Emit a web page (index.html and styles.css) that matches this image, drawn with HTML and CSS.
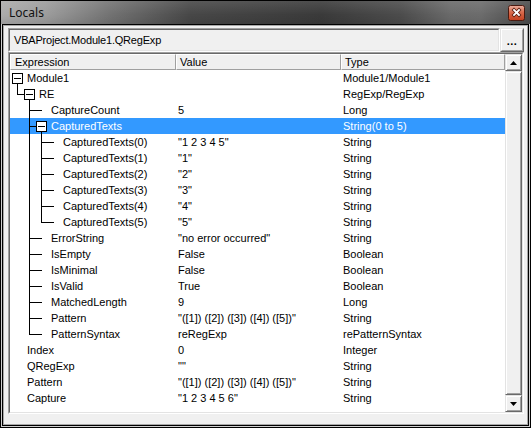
FILE: index.html
```html
<!DOCTYPE html>
<html>
<head>
<meta charset="utf-8">
<link rel="stylesheet" href="styles.css">
</head>
<body>
<div class="win">
  <div class="titlebar">
    <span class="title">Locals</span>
    <span class="close">
      <svg width="17" height="16" viewBox="0 0 17 16">
        <defs>
          <linearGradient id="cg" x1="0" y1="0" x2="0" y2="1">
            <stop offset="0" stop-color="#eab0a0"/>
            <stop offset="0.45" stop-color="#d86a4c"/>
            <stop offset="1" stop-color="#c4401e"/>
          </linearGradient>
        </defs>
        <rect x="0.5" y="0.5" width="16" height="15" rx="2" fill="url(#cg)" stroke="#4a1a10"/>
        <path d="M6 5 L11 10 M11 5 L6 10" stroke="#5a1e10" stroke-width="3.4" stroke-linecap="square"/>
        <path d="M6 5 L11 10 M11 5 L6 10" stroke="#ffffff" stroke-width="1.8" stroke-linecap="square"/>
      </svg>
    </span>
  </div>
  <div class="frame">
    <div class="client">
      <div class="toolbar">
        <div class="combo"><div class="combo-in">VBAProject.Module1.QRegExp</div></div>
        <div class="btn"><div class="btn-in">...</div></div>
      </div>
      <div class="list">
        <div class="list-in">
          <div class="grid">
            <div class="header">
              <div class="hcell first">Expression</div>
              <div class="hcell">Value</div>
              <div class="hcell">Type</div>
            </div>
            <div class="rows">
              <div class="row">
                <div class="c1"><svg class="g" viewBox="0 0 12 16"><rect x="0.5" y="3.5" width="10" height="10" fill="#fff" stroke="#000"/><path d="M2 8.5h7M5.5 14v2" stroke="#000"/></svg><span class="txt">Module1</span></div>
                <div class="c2"></div><div class="c3">Module1/Module1</div>
              </div>
              <div class="row">
                <div class="c1"><span class="g elbow"></span><svg class="g" viewBox="0 0 12 16"><rect x="0.5" y="3.5" width="10" height="10" fill="#fff" stroke="#000"/><path d="M2 8.5h7M5.5 14v2" stroke="#000"/></svg><span class="txt">RE</span></div>
                <div class="c2"></div><div class="c3">RegExp/RegExp</div>
              </div>
              <div class="row">
                <div class="c1"><span class="g"></span><span class="g tee"></span><span class="g leaf"></span><span class="txt">CaptureCount</span></div>
                <div class="c2">5</div><div class="c3">Long</div>
              </div>
              <div class="row sel">
                <div class="c1"><span class="g"></span><span class="g tee"></span><svg class="g" viewBox="0 0 12 16"><rect x="0.5" y="3.5" width="10" height="10" fill="#fff" stroke="#000"/><path d="M2 8.5h7M5.5 14v2" stroke="#000"/></svg><span class="txt">CapturedTexts</span></div>
                <div class="c2"></div><div class="c3">String(0 to 5)</div>
              </div>
              <div class="row">
                <div class="c1"><span class="g"></span><span class="g pipe"></span><span class="g tee"></span><span class="g leaf"></span><span class="txt">CapturedTexts(0)</span></div>
                <div class="c2">"1 2 3 4 5"</div><div class="c3">String</div>
              </div>
              <div class="row">
                <div class="c1"><span class="g"></span><span class="g pipe"></span><span class="g tee"></span><span class="g leaf"></span><span class="txt">CapturedTexts(1)</span></div>
                <div class="c2">"1"</div><div class="c3">String</div>
              </div>
              <div class="row">
                <div class="c1"><span class="g"></span><span class="g pipe"></span><span class="g tee"></span><span class="g leaf"></span><span class="txt">CapturedTexts(2)</span></div>
                <div class="c2">"2"</div><div class="c3">String</div>
              </div>
              <div class="row">
                <div class="c1"><span class="g"></span><span class="g pipe"></span><span class="g tee"></span><span class="g leaf"></span><span class="txt">CapturedTexts(3)</span></div>
                <div class="c2">"3"</div><div class="c3">String</div>
              </div>
              <div class="row">
                <div class="c1"><span class="g"></span><span class="g pipe"></span><span class="g tee"></span><span class="g leaf"></span><span class="txt">CapturedTexts(4)</span></div>
                <div class="c2">"4"</div><div class="c3">String</div>
              </div>
              <div class="row">
                <div class="c1"><span class="g"></span><span class="g pipe"></span><span class="g elbow"></span><span class="g leaf"></span><span class="txt">CapturedTexts(5)</span></div>
                <div class="c2">"5"</div><div class="c3">String</div>
              </div>
              <div class="row">
                <div class="c1"><span class="g"></span><span class="g tee"></span><span class="g leaf"></span><span class="txt">ErrorString</span></div>
                <div class="c2">"no error occurred"</div><div class="c3">String</div>
              </div>
              <div class="row">
                <div class="c1"><span class="g"></span><span class="g tee"></span><span class="g leaf"></span><span class="txt">IsEmpty</span></div>
                <div class="c2">False</div><div class="c3">Boolean</div>
              </div>
              <div class="row">
                <div class="c1"><span class="g"></span><span class="g tee"></span><span class="g leaf"></span><span class="txt">IsMinimal</span></div>
                <div class="c2">False</div><div class="c3">Boolean</div>
              </div>
              <div class="row">
                <div class="c1"><span class="g"></span><span class="g tee"></span><span class="g leaf"></span><span class="txt">IsValid</span></div>
                <div class="c2">True</div><div class="c3">Boolean</div>
              </div>
              <div class="row">
                <div class="c1"><span class="g"></span><span class="g tee"></span><span class="g leaf"></span><span class="txt">MatchedLength</span></div>
                <div class="c2">9</div><div class="c3">Long</div>
              </div>
              <div class="row">
                <div class="c1"><span class="g"></span><span class="g tee"></span><span class="g leaf"></span><span class="txt">Pattern</span></div>
                <div class="c2">"([1]) ([2]) ([3]) ([4]) ([5])"</div><div class="c3">String</div>
              </div>
              <div class="row">
                <div class="c1"><span class="g"></span><span class="g elbow"></span><span class="g leaf"></span><span class="txt">PatternSyntax</span></div>
                <div class="c2">reRegExp</div><div class="c3">rePatternSyntax</div>
              </div>
              <div class="row">
                <div class="c1"><span class="g"></span><span class="txt">Index</span></div>
                <div class="c2">0</div><div class="c3">Integer</div>
              </div>
              <div class="row">
                <div class="c1"><span class="g"></span><span class="txt">QRegExp</span></div>
                <div class="c2">""</div><div class="c3">String</div>
              </div>
              <div class="row">
                <div class="c1"><span class="g"></span><span class="txt">Pattern</span></div>
                <div class="c2">"([1]) ([2]) ([3]) ([4]) ([5])"</div><div class="c3">String</div>
              </div>
              <div class="row">
                <div class="c1"><span class="g"></span><span class="txt">Capture</span></div>
                <div class="c2">"1 2 3 4 5 6"</div><div class="c3">String</div>
              </div>
            </div>
          </div>
          <div class="vscroll">
            <div class="sbtn"><svg width="7" height="4" viewBox="0 0 7 4"><path d="M3.5 0 L7 4 L0 4 Z" fill="#000"/></svg></div>
            <div class="thumb"></div>
            <div class="sbtn"><svg width="7" height="4" viewBox="0 0 7 4"><path d="M0 0 L7 0 L3.5 4 Z" fill="#000"/></svg></div>
          </div>
        </div>
      </div>
    </div>
  </div>
</div>
</body>
</html>
```

FILE: styles.css
```css
html, body {
  margin: 0;
  padding: 0;
  background: #000;
}

body {
  width: 531px;
  height: 428px;
  overflow: hidden;
  font-family: "Liberation Sans", Arial, sans-serif;
  font-size: 11px;
  color: #000;
}

.win {
  width: 531px;
  height: 428px;
  box-sizing: border-box;
  border: 1px solid #000;
  background: #cfcfcf;
  display: flex;
  flex-direction: column;
}

.titlebar {
  height: 23px;
  flex: none;
  display: flex;
  align-items: center;
  padding-left: 8px;
  background:
    linear-gradient(180deg, rgba(255,255,255,0.10) 0, rgba(255,255,255,0) 60%, rgba(0,0,0,0.08) 100%),
    linear-gradient(90deg, #ababab 0, #9c9c9c 45px, #727272 110px, #474747 190px, #3a3a3a 320px, #4c4c4c 400px, #6a6a6a 450px, #6c6c6c 480px, #4a4a4a 531px);
}

.title {
  font-family: "Noto Sans", "Open Sans", sans-serif;
  font-size: 12px;
  color: #111;
  line-height: 16px;
}

.close {
  margin-left: auto;
  margin-right: 5px;
  width: 17px;
  height: 16px;
  display: flex;
}

.frame {
  flex: 1;
  margin: 0 1px 1px;
  border: 1px solid #000;
  display: flex;
}

.client {
  flex: 1;
  background: #f0f0f0;
  border: 1px solid #a8a8a8;
  padding: 2px 3px 10px 4px;
  display: flex;
  flex-direction: column;
}

.toolbar {
  height: 24px;
  display: flex;
  flex: none;
}

.combo {
  flex: 1;
  border: 1px solid;
  border-color: #a0a0a0 #ffffff #ffffff #a0a0a0;
  display: flex;
}

.combo-in {
  flex: 1;
  border: 1px solid;
  border-color: #696969 #e3e3e3 #e3e3e3 #696969;
  background: #f0f0f0;
  padding-left: 4px;
  line-height: 20px;
  font-size: 11px;
  letter-spacing: -0.2px;
}

.btn {
  width: 24px;
  flex: none;
  box-sizing: border-box;
  border: 1px solid;
  border-color: #e3e3e3 #696969 #696969 #e3e3e3;
  display: flex;
}

.btn-in {
  flex: 1;
  border: 1px solid;
  border-color: #ffffff #a0a0a0 #a0a0a0 #ffffff;
  background: #f0f0f0;
  font-weight: bold;
  font-size: 11px;
  line-height: 22px;
  text-align: center;
  letter-spacing: 0.5px;
}

.list {
  height: 362px;
  flex: none;
  box-sizing: border-box;
  border: 1px solid;
  border-color: #a0a0a0 #ffffff #ffffff #a0a0a0;
  display: flex;
}

.list-in {
  flex: 1;
  border: 1px solid;
  border-color: #696969 #e3e3e3 #e3e3e3 #696969;
  background: #fff;
  display: flex;
}

.grid {
  flex: 1;
  display: flex;
  flex-direction: column;
}

.header {
  display: grid;
  grid-template-columns: 166px 165px 164px;
  height: 16px;
  flex: none;
}

.hcell {
  box-sizing: border-box;
  border: 1px solid;
  border-color: #ffffff #a0a0a0 #a0a0a0 #ffffff;
  background: #f0f0f0;
  padding-left: 3px;
  line-height: 14px;
  white-space: nowrap;
  overflow: hidden;
}

.hcell.first {
  padding-left: 4px;
}

.rows {
  display: flex;
  flex-direction: column;
}

.row {
  display: grid;
  grid-template-columns: 166px 165px 164px;
  height: 16px;
  line-height: 16px;
  white-space: nowrap;
}

.row.sel {
  background: #3399ff;
  color: #fff;
}

.c1 {
  display: flex;
  padding-left: 2px;
  overflow: hidden;
}

.c2, .c3 {
  padding-left: 2px;
  overflow: hidden;
}

.g {
  width: 12px;
  height: 16px;
  flex: none;
  display: block;
}

.txt {
  margin-left: 3px;
}

.pipe {
  background: linear-gradient(#000, #000) 5px 0 / 1px 16px no-repeat;
}

.tee {
  background:
    linear-gradient(#000, #000) 5px 0 / 1px 16px no-repeat,
    linear-gradient(#000, #000) 6px 8px / 6px 1px no-repeat;
}

.elbow {
  background:
    linear-gradient(#000, #000) 5px 0 / 1px 9px no-repeat,
    linear-gradient(#000, #000) 6px 8px / 6px 1px no-repeat;
}

.leaf {
  background: linear-gradient(#000, #000) 0 8px / 6px 1px no-repeat;
}

.vscroll {
  width: 17px;
  flex: none;
  display: flex;
  flex-direction: column;
  background: #f0f0f0;
}

.sbtn, .thumb {
  box-sizing: border-box;
  border: 1px solid;
  border-color: #e3e3e3 #696969 #696969 #e3e3e3;
  box-shadow: inset 1px 1px #ffffff, inset -1px -1px #a0a0a0;
  background: #f0f0f0;
}

.sbtn {
  height: 17px;
  flex: none;
  display: flex;
  align-items: center;
  justify-content: center;
}

.thumb {
  flex: 1;
}
```
